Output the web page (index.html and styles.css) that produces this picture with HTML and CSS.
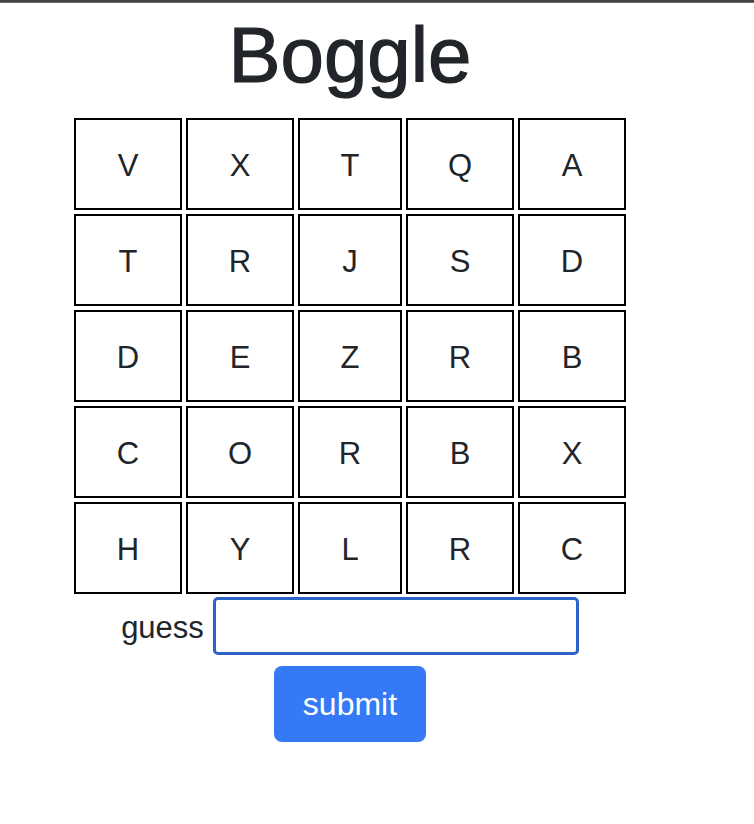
FILE: index.html
```html
<!DOCTYPE html>
<html lang="en">
<head>
<meta charset="utf-8">
<title>Boggle</title>
<link rel="stylesheet" href="styles.css">
</head>
<body>
<div class="topbar"></div>
<main class="page">
  <h1 class="title">Boggle</h1>
  <div class="board">
    <div class="cell">V</div><div class="cell">X</div><div class="cell">T</div><div class="cell">Q</div><div class="cell">A</div>
    <div class="cell">T</div><div class="cell">R</div><div class="cell">J</div><div class="cell">S</div><div class="cell">D</div>
    <div class="cell">D</div><div class="cell">E</div><div class="cell">Z</div><div class="cell">R</div><div class="cell">B</div>
    <div class="cell">C</div><div class="cell">O</div><div class="cell">R</div><div class="cell">B</div><div class="cell">X</div>
    <div class="cell">H</div><div class="cell">Y</div><div class="cell">L</div><div class="cell">R</div><div class="cell">C</div>
  </div>
  <form class="guess-form">
    <div class="guess-row">
      <label class="guess-label" for="guess">guess</label>
      <input class="guess-input" id="guess" type="text" autofocus>
    </div>
    <button class="submit" type="button">submit</button>
  </form>
</main>
</body>
</html>
```

FILE: styles.css
```css
* { box-sizing: border-box; }

html, body {
  margin: 0;
  padding: 0;
  background: #ffffff;
}

body {
  font-family: "Liberation Sans", Arial, sans-serif;
  color: #212529;
}

.topbar {
  height: 3px;
  background: #434343;
  border-bottom: 1px solid #6a6a6a;
}

.page {
  width: 700px;
  display: flex;
  flex-direction: column;
  align-items: center;
}

.title {
  margin: 6px 0 0 0;
  font-size: 78px;
  font-weight: 400;
  line-height: 93px;
  -webkit-text-stroke: 1.2px #212529;
}

.board {
  margin-top: 16px;
  display: grid;
  grid-template-columns: 108px 108px 104px 108px 108px;
  grid-auto-rows: 92px;
  gap: 4px;
}

.cell {
  border: 2px solid #000;
  display: flex;
  align-items: center;
  justify-content: center;
  padding-top: 3px;
  font-size: 31px;
  color: #212529;
}

.guess-form {
  display: flex;
  flex-direction: column;
  align-items: center;
}

.guess-row {
  margin-top: 3px;
  display: flex;
  align-items: center;
  gap: 9px;
}

.guess-label {
  font-size: 31px;
  padding-top: 3px;
}

.guess-input {
  width: 366px;
  height: 58px;
  border: 3px solid #2d63c9;
  border-radius: 5px;
  outline: none;
  font-size: 28px;
  font-family: inherit;
  padding: 0 10px;
}

.submit {
  margin-top: 11px;
  width: 152px;
  height: 76px;
  background: #3679f6;
  color: #ffffff;
  border: none;
  border-radius: 8px;
  font-family: inherit;
  font-size: 32px;
  padding: 0;
}
```
